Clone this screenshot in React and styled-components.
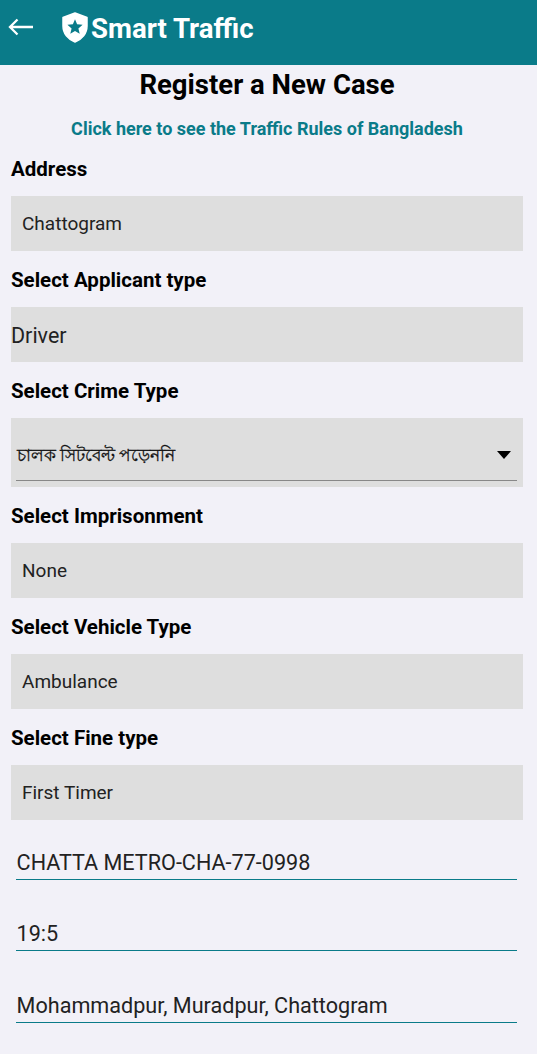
import React from 'react';
import styled, { createGlobalStyle } from 'styled-components';

const Global = createGlobalStyle`
  * { box-sizing: border-box; }
  body { margin: 0; background: #f2f1f8; font-family: Roboto, "Noto Sans", sans-serif; color: #000; }
`;
const Screen = styled.main`
  height: 1054px; overflow: hidden; background: #f2f1f8;
`;
const Header = styled.header`
  height: 65px; background: #0a7b89; display: flex; align-items: center; color: #fff; padding: 0 0 11px 8px;
`;
const BackIcon = styled.svg`
  width: 26px; height: 20px; display: block;
`;
const Shield = styled.svg`
  width: 26px; height: 31px; margin-left: 28px; display: block;
`;
const Brand = styled.h1`
  margin: 4px 0 0 3px; font-size: 27.6px; line-height: 34px; font-weight: 700; white-space: nowrap;
`;
const Title = styled.h2`
  margin: 0; padding-right: 3px; height: 40px; line-height: 39px; font-size: 27.5px; text-align: center; font-weight: 700;
`;
const RulesLink = styled.a`
  display: block; padding-right: 3px; height: 35px; line-height: 47px; font-size: 18px; text-align: center; font-weight: 700; color: #0a7b89;
`;
const Form = styled.form`
  padding: 0 14px 0 11px;
`;
const Label = styled.label`
  display: block; height: 56px; line-height: 58px; font-size: 20.5px; font-weight: 700; white-space: nowrap;
`;
const Field = styled.div`
  height: 55px; background: #dedede; padding-left: ${p => (p.$flush ? 0 : 11)}px;
  font-size: ${p => (p.$flush ? 21.5 : 19)}px; line-height: ${p => (p.$flush ? 57 : 56)}px; color: #222;
`;
const SelectField = styled.div`
  height: 69px; background: #dedede; padding: 0 6px 6px 5px;
`;
const SelectLine = styled.div`
  height: 63px; border-bottom: 1px solid #888; display: flex; align-items: center; justify-content: space-between;
  padding: 12px 6px 0 0; font-size: 17.1px; color: #111;
`;
const Crime = styled.span`
  padding: 2px 0 0 1px; -webkit-text-stroke: 0.3px #111;
`;
const Underlined = styled.div`
  margin: 0 6px 0 5px; height: 71.5px; padding: 35px 0 0 0.6px; border-bottom: 1px solid transparent;
  background: linear-gradient(#0a7b89, #0a7b89) left bottom / 100% 1.4px no-repeat border-box;
  font-size: 21.6px; line-height: 37px; color: #222; white-space: nowrap;
`;
const FirstLine = styled(Underlined)`
  height: 60px; padding-top: 24px;
`;

export default function App() {
  return (
    <>
      <Global />
      <Screen>
        <Header>
          <BackIcon viewBox="0 0 26 20" fill="none" stroke="#fff" strokeWidth="2.3"><path d="M25 10H2M9.5 2.5L2 10L9.5 17.5" /></BackIcon>
          <Shield viewBox="0 0 26 31"><path fill="#fff" stroke="#fff" strokeWidth="1.5" strokeLinejoin="round" d="M13 1L25 5.5V14C25 21.5 20 27.5 13 30C6 27.5 1 21.5 1 14V5.5Z" /><path fill="#0a7b89" d="M13 7.2l2.1 5.1 5.5.5-4.2 3.6 1.3 5.4-4.7-2.9-4.7 2.9 1.3-5.4-4.2-3.6 5.5-.5z" /></Shield>
          <Brand>Smart Traffic</Brand>
        </Header>
        <Title>Register a New Case</Title>
        <RulesLink>Click here to see the Traffic Rules of Bangladesh</RulesLink>
        <Form>
          <Label>Address</Label>
          <Field>Chattogram</Field>
          <Label>Select Applicant type</Label>
          <Field $flush>Driver</Field>
          <Label>Select Crime Type</Label>
          <SelectField><SelectLine><Crime>চালক সিটবেল্ট পড়েননি</Crime><svg width="14" height="8" viewBox="0 0 14 8"><path d="M0 0H14L7 8Z" /></svg></SelectLine></SelectField>
          <Label>Select Imprisonment</Label>
          <Field>None</Field>
          <Label>Select Vehicle Type</Label>
          <Field>Ambulance</Field>
          <Label>Select Fine type</Label>
          <Field>First Timer</Field>
          <FirstLine>CHATTA METRO-CHA-77-0998</FirstLine>
          <Underlined>19:5</Underlined>
          <Underlined>Mohammadpur, Muradpur, Chattogram</Underlined>
        </Form>
      </Screen>
    </>
  );
}
